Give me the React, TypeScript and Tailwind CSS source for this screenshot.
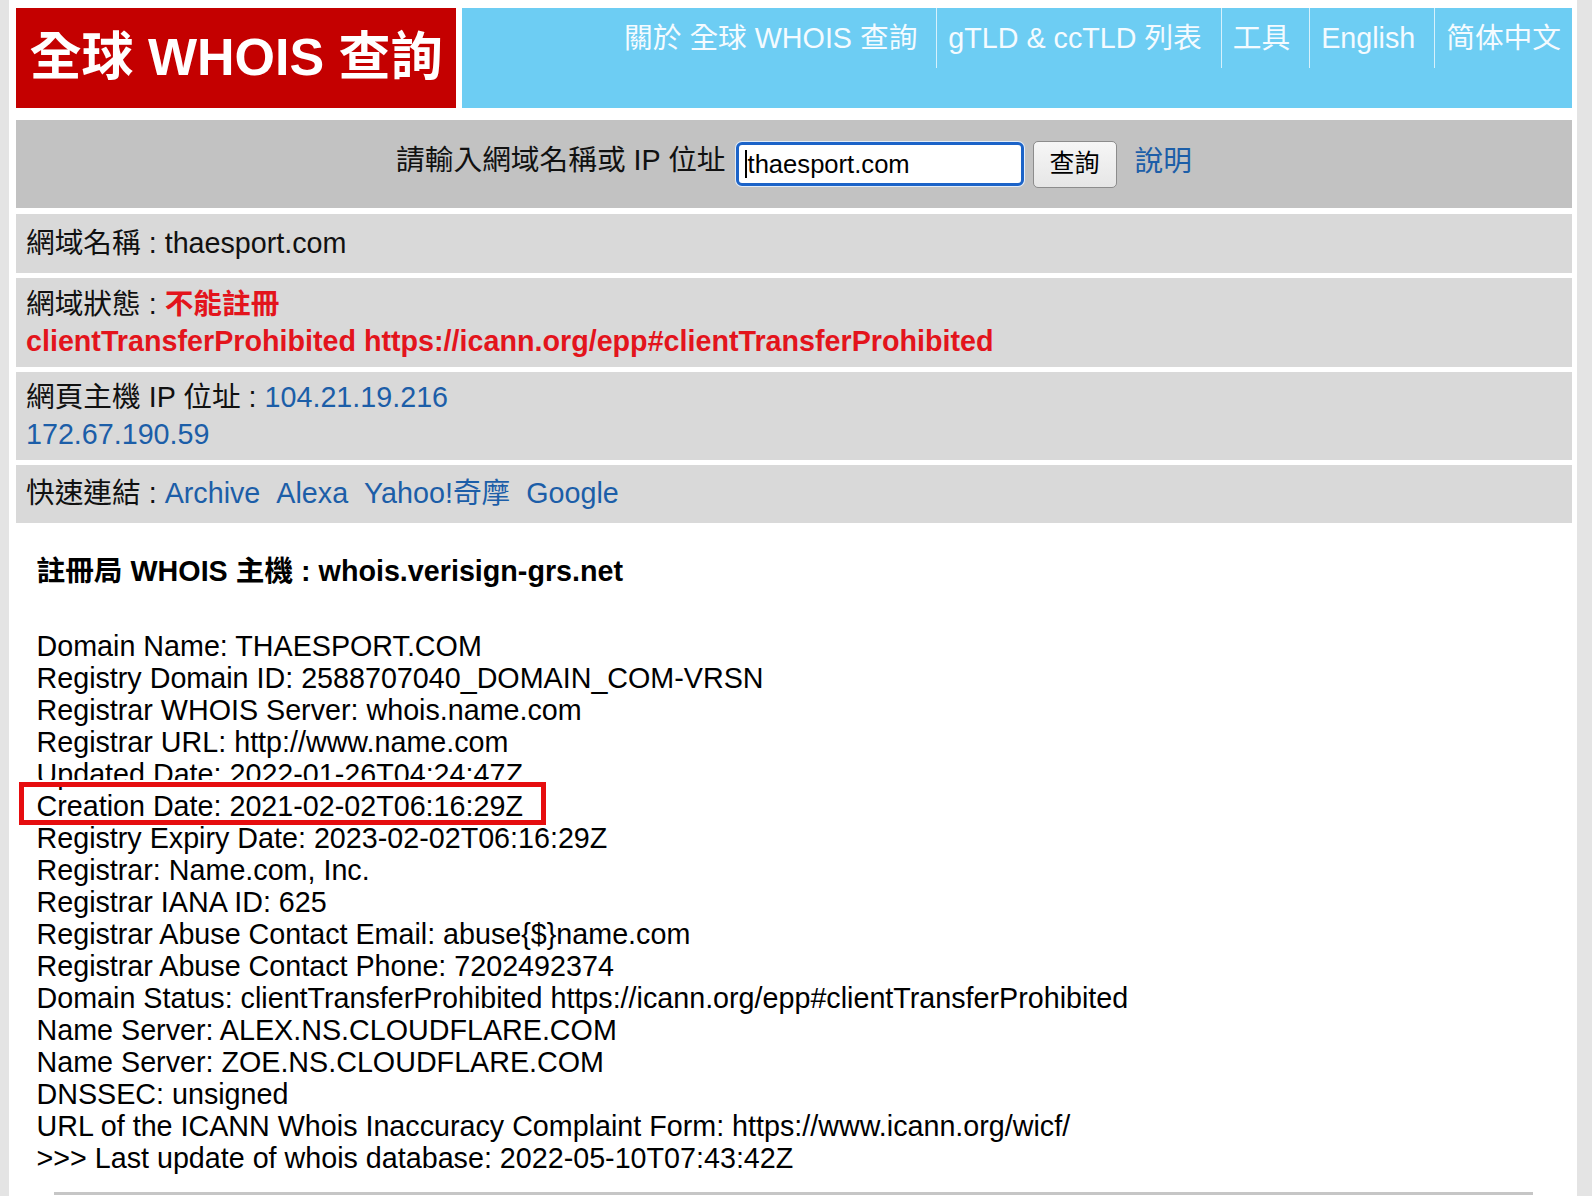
const navItems = ["關於 全球 WHOIS 查詢", "gTLD & ccTLD 列表", "工具", "English", "简体中文"];

const whoisLines = [
  "Domain Name: THAESPORT.COM",
  "Registry Domain ID: 2588707040_DOMAIN_COM-VRSN",
  "Registrar WHOIS Server: whois.name.com",
  "Registrar URL: http://www.name.com",
  "Updated Date: 2022-01-26T04:24:47Z",
  "Creation Date: 2021-02-02T06:16:29Z",
  "Registry Expiry Date: 2023-02-02T06:16:29Z",
  "Registrar: Name.com, Inc.",
  "Registrar IANA ID: 625",
  "Registrar Abuse Contact Email: abuse{$}name.com",
  "Registrar Abuse Contact Phone: 7202492374",
  "Domain Status: clientTransferProhibited https://icann.org/epp#clientTransferProhibited",
  "Name Server: ALEX.NS.CLOUDFLARE.COM",
  "Name Server: ZOE.NS.CLOUDFLARE.COM",
  "DNSSEC: unsigned",
  "URL of the ICANN Whois Inaccuracy Complaint Form: https://www.icann.org/wicf/",
  ">>> Last update of whois database: 2022-05-10T07:43:42Z",
];

const quickLinks = ["Archive", "Alexa", "Yahoo!奇摩", "Google"];

export default function App() {
  return (
    <div className="h-[1196px] overflow-hidden bg-[#e4e4e4] pl-[9px] pr-[15px] font-['Liberation_Sans','Noto_Sans_CJK_TC',sans-serif] text-[28.7px] text-[#111]">
      <div className="min-h-full bg-white pt-[8px] pl-[7px] pr-[5px]">
        {/* Header */}
        <header className="flex h-[100px] gap-[6px]">
          <div className="flex w-[440px] items-center justify-center bg-[#c40000] pb-[2px] text-[52px] font-bold text-white">
            全球 WHOIS 查詢
          </div>
          <nav className="flex flex-1 items-start justify-end bg-[#6dcdf3] pr-[11px]">
            {navItems.map((item, i) => (
              <a
                key={item}
                href="#"
                className={
                  i === 0
                    ? "h-[60px] whitespace-pre pl-[11px] pr-[19px] pt-[12px] leading-[36px] text-[#f4fbff]"
                    : i === navItems.length - 1
                      ? "h-[60px] whitespace-pre border-l border-[#d6f1fc] pl-[11px] pt-[12px] leading-[36px] text-[#f4fbff]"
                      : "h-[60px] whitespace-pre border-l border-[#d6f1fc] pl-[11px] pr-[19px] pt-[12px] leading-[36px] text-[#f4fbff]"
                }
              >
                {item}
              </a>
            ))}
          </nav>
        </header>

        {/* Search */}
        <div className="mt-[12px] flex h-[88px] items-center justify-center bg-[#c2c2c2]">
          <span className="pb-[6px]">請輸入網域名稱或 IP 位址</span>
          <div className="ml-[10px] flex h-[44px] w-[288px] items-center rounded-[6px] border-[3px] border-[#1b63c8] bg-white pl-[6px] shadow-[0_0_0_1px_#e3edf8] text-[25.6px] text-black">
            <span className="mr-[1px] inline-block h-[28px] w-[2px] bg-black" />
            thaesport.com
          </div>
          <button className="ml-[9px] h-[47px] w-[84px] rounded-[5px] border border-[#8c8c8c] bg-gradient-to-b from-[#f6f6f6] to-[#e6e6e6] text-[25px] text-black">
            查詢
          </button>
          <a href="#" className="ml-[18px] pb-[4px] text-[#1c5ea8]">
            說明
          </a>
        </div>

        {/* Result rows */}
        <div className="mt-[6px] flex h-[59px] items-center whitespace-pre bg-[#d9d9d9] px-[10px]">
          網域名稱 : thaesport.com
        </div>
        <div className="mt-[5px] flex h-[89px] flex-col justify-center whitespace-pre bg-[#d9d9d9] px-[10px] leading-[37px]">
          <div>
            網域狀態 : <span className="font-bold text-[#e3141c]">不能註冊</span>
          </div>
          <div className="font-bold text-[#e3141c]">
            clientTransferProhibited https://icann.org/epp#clientTransferProhibited
          </div>
        </div>
        <div className="mt-[5px] flex h-[88px] flex-col justify-center whitespace-pre bg-[#d9d9d9] px-[10px] leading-[37px]">
          <div>
            網頁主機 IP 位址 : <a href="#" className="text-[#1c5ea8]">104.21.19.216</a>
          </div>
          <a href="#" className="text-[#1c5ea8]">
            172.67.190.59
          </a>
        </div>
        <div className="mt-[5px] flex h-[58px] items-center whitespace-pre bg-[#d9d9d9] px-[10px]">
          <span>快速連結 : </span>
          <div className="flex gap-[16px]">
            {quickLinks.map((l) => (
              <a key={l} href="#" className="text-[#1c5ea8]">
                {l}
              </a>
            ))}
          </div>
        </div>

        {/* WHOIS raw */}
        <section className="pl-[20.5px] pt-[31.6px] text-black">
          <h2 className="font-bold leading-[32px]">註冊局 WHOIS 主機 : whois.verisign-grs.net</h2>
          <div className="mt-[43.4px] leading-[32px]">
            {whoisLines.map((line) =>
              line.startsWith("Creation Date") ? (
                <div key={line} className="relative">
                  {line}
                  <span className="absolute left-[-18px] top-[-8px] h-[43px] w-[527px] border-[5px] border-[#e60d0f] shadow-[0_-2px_0_0_#fff]" />
                </div>
              ) : (
                <div key={line}>{line}</div>
              )
            )}
          </div>
          <div className="ml-[17.5px] mt-[18.5px] h-[3px] w-[1479px] bg-[#c6c6c6]" />
        </section>
      </div>
    </div>
  );
}
